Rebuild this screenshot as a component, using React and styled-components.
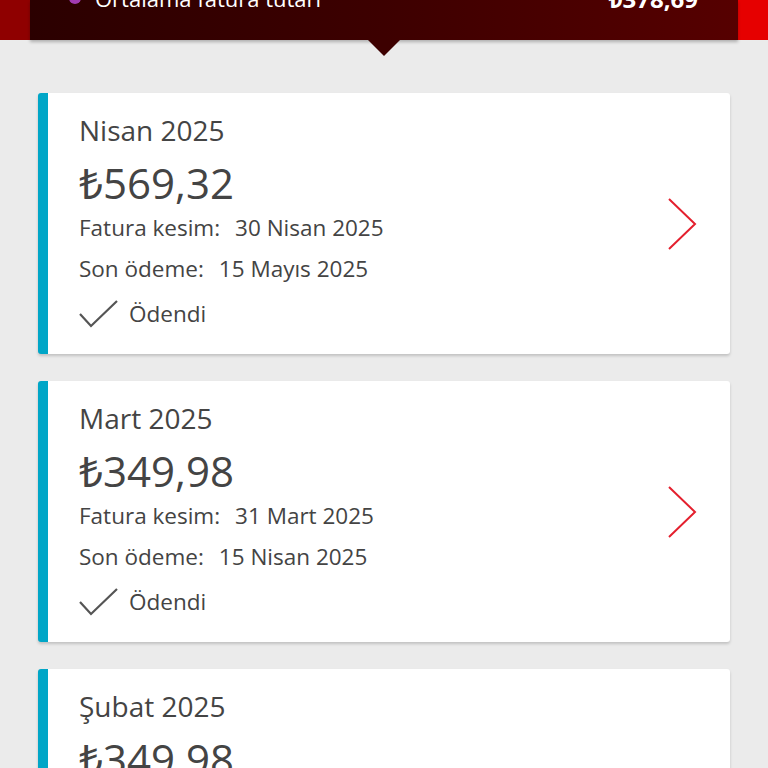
import React from "react";
import styled, { createGlobalStyle } from "styled-components";

const GlobalStyle = createGlobalStyle`
  html, body {
    margin: 0;
    padding: 0;
    background: #ebebeb;
    font-family: "Open Sans", "Noto Sans", sans-serif;
    overflow: hidden;
  }
`;

const bills = [
  { month: "Nisan 2025", amount: "569,32", cut: "30 Nisan 2025", due: "15 Mayıs 2025", paid: true },
  { month: "Mart 2025", amount: "349,98", cut: "31 Mart 2025", due: "15 Nisan 2025", paid: true },
  { month: "Şubat 2025", amount: "349,98", cut: "28 Şubat 2025", due: "15 Mart 2025", paid: true },
];

const Page = styled.div`
  width: 768px;
  height: 768px;
  overflow: hidden;
`;

const Header = styled.div`
  display: flex;
  height: 40px;
  position: relative;
  z-index: 1;
`;

const Stripe = styled.div`
  width: 30px;
  background: ${(props) => props.color};
`;

const Panel = styled.div`
  flex: 1;
  position: relative;
  display: flex;
  align-items: flex-end;
  padding: 0 40px 0 39px;
  background: linear-gradient(90deg, #2b0000 0%, #3d0000 50%, #560000 100%);
  box-shadow: 0 2px 3px rgba(0, 0, 0, 0.25);

  &::after {
    content: "";
    position: absolute;
    left: 338px;
    bottom: -16px;
    border-left: 16px solid transparent;
    border-right: 16px solid transparent;
    border-top: 16px solid #3d0000;
  }
`;

const Summary = styled.div`
  flex: 1;
  display: flex;
  align-items: center;
  justify-content: space-between;
  height: 40px;
  margin-bottom: 22px;
  color: #fff;
`;

const Label = styled.span`
  display: flex;
  align-items: center;
  gap: 14px;
  font-size: 22px;
`;

const Dot = styled.span`
  width: 12px;
  height: 12px;
  border-radius: 50%;
  background: #a23bb0;
`;

const Total = styled.span`
  font-size: 24px;
  font-weight: 700;
`;

const List = styled.div`
  display: flex;
  flex-direction: column;
  gap: 27px;
  padding: 53px 38px 0;
`;

const Card = styled.div`
  display: flex;
  align-items: center;
  height: 261px;
  background: #fff;
  border-left: 10px solid #00a6c7;
  border-radius: 3px;
  box-shadow: 0 2px 3px rgba(0, 0, 0, 0.18);
  padding: 0 32px 0 31px;
  flex-shrink: 0;
  color: #444;
`;

const Body = styled.div`
  flex: 1;
  display: flex;
  flex-direction: column;
`;

const Month = styled.div`
  font-size: 28px;
  line-height: 38px;
  margin-bottom: 8px;
`;

const Amount = styled.div`
  font-size: 42px;
  line-height: 52px;
  margin-bottom: -2px;
`;

const Detail = styled.div`
  display: flex;
  gap: 15px;
  font-size: 22.5px;
  line-height: 41px;
`;

const Status = styled.div`
  display: flex;
  align-items: center;
  gap: 10px;
  font-size: 22.5px;
  line-height: 45px;
  margin-top: 2px;
`;

const Chevron = () => (
  <svg width="32" height="56" viewBox="0 0 32 56">
    <polyline points="3,3 29,28 3,53" fill="none" stroke="#e4202e" strokeWidth="2" />
  </svg>
);

const Check = () => (
  <svg width="40" height="30" viewBox="0 0 40 30">
    <polyline points="1,15 12,27 38,2" fill="none" stroke="#555" strokeWidth="2.2" />
  </svg>
);

const App = () => {
  return (
    <Page>
      <GlobalStyle />
      <Header>
        <Stripe color="#8f0000" />
        <Panel>
          <Summary>
            <Label>
              <Dot />
              Ortalama fatura tutarı
            </Label>
            <Total>₺378,69</Total>
          </Summary>
        </Panel>
        <Stripe color="#e60000" />
      </Header>
      <List>
        {bills.map((bill) => (
          <Card key={bill.month}>
            <Body>
              <Month>{bill.month}</Month>
              <Amount>₺{bill.amount}</Amount>
              <Detail>
                <span>Fatura kesim:</span>
                <span>{bill.cut}</span>
              </Detail>
              <Detail>
                <span>Son ödeme:</span>
                <span>{bill.due}</span>
              </Detail>
              {bill.paid && (
                <Status>
                  <Check />
                  Ödendi
                </Status>
              )}
            </Body>
            <Chevron />
          </Card>
        ))}
      </List>
    </Page>
  );
};

export default App;
